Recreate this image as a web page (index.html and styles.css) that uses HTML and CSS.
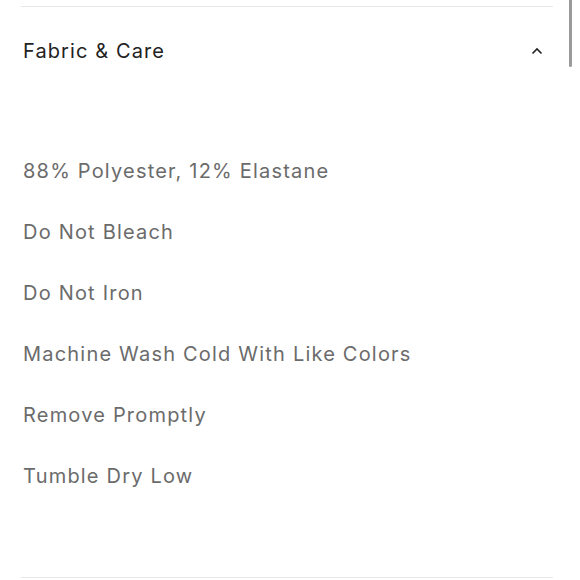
FILE: index.html
```html
<!DOCTYPE html>
<html>
<head>
<meta charset="utf-8">
<link rel="stylesheet" href="styles.css">
</head>
<body>
<div class="panel">
  <div class="rule"></div>
  <div class="header">
    <h2 class="title">Fabric &amp; Care</h2>
    <svg class="chev" width="12" height="8" viewBox="0 0 12 8"><path d="M1.5 6.5 L6 2 L10.5 6.5" fill="none" stroke="#222" stroke-width="1.6"/></svg>
  </div>
  <ul class="list">
    <li>88% Polyester, 12% Elastane</li>
    <li>Do Not Bleach</li>
    <li>Do Not Iron</li>
    <li>Machine Wash Cold With Like Colors</li>
    <li>Remove Promptly</li>
    <li>Tumble Dry Low</li>
  </ul>
  <div class="rule bottom"></div>
</div>
<div class="scrollbar"></div>
</body>
</html>
```
FILE: styles.css
```css
html, body {
  margin: 0;
  padding: 0;
  background: #fff;
}
body {
  font-family: Inter, "Noto Sans", sans-serif;
  width: 580px;
  height: 580px;
  overflow: hidden;
  position: relative;
}
.panel {
  padding: 6px 27px 0 21px;
  display: flex;
  flex-direction: column;
}
.rule {
  height: 1px;
  background: #e8e8e8;
}
.header {
  display: flex;
  align-items: center;
  justify-content: space-between;
  margin-top: 32px;
  padding-left: 2px;
  padding-right: 10px;
}
.title {
  margin: 0;
  font-size: 20px;
  font-weight: 400;
  line-height: 24px;
  letter-spacing: 1.1px;
  color: #222;
}
.chev {
  display: block;
}
.list {
  list-style: none;
  margin: 96px 0 0;
  padding: 0 0 0 2px;
  display: flex;
  flex-direction: column;
  gap: 37px;
}
.list li {
  font-size: 20px;
  line-height: 24px;
  letter-spacing: 1.2px;
  color: #6b6b6b;
}
.rule.bottom {
  margin-top: 89px;
}
.scrollbar {
  position: absolute;
  right: 8px;
  top: 0;
  width: 3px;
  height: 67px;
  background: #9a9a9a;
  border-radius: 0 0 2px 2px;
}
```
